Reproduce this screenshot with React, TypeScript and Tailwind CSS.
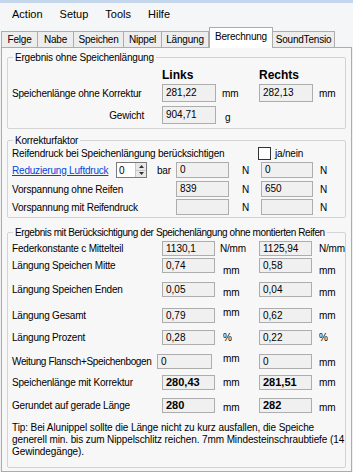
import React from 'react'

function Field({ value, className = '' }: { value?: string; className?: string }) {
  return (
    <div
      className={`h-full border border-[#adadad] bg-[#f0f0f0] pl-[3px] flex items-center leading-none tracking-normal ${className}`}
    >
      {value}
    </div>
  )
}

function GroupBox({
  title,
  className = '',
  titleClass = '',
  children,
}: {
  title: string
  className?: string
  titleClass?: string
  children: React.ReactNode
}) {
  return (
    <div className={`relative mx-[5px] border border-[#d3d3d3] rounded-[2px] ${className}`}>
      <span className={`absolute -top-[6px] left-[5px] px-[2px] bg-[#f7f7f7] leading-[12px] whitespace-nowrap ${titleClass}`}>
        {title}
      </span>
      {children}
    </div>
  )
}

const tabs = [
  { name: 'Felge', w: 'w-[37px]' },
  { name: 'Nabe', w: 'w-[36px]' },
  { name: 'Speichen', w: 'w-[50px]' },
  { name: 'Nippel', w: 'w-[38px]' },
  { name: 'Längung', w: 'w-[47px]' },
  { name: 'Berechnung', w: 'w-[64px]' },
  { name: 'SoundTensio', w: 'w-[62px]' },
]

export default function App() {
  return (
    <div className="w-[353px] h-[472px] overflow-hidden bg-[#f0f0f0] font-['Liberation_Sans',Arial,sans-serif] text-[10px] text-black">
      <div className="h-[3px] bg-[#c3d6eb]" />

      {/* Menu */}
      <div className="h-[23px] flex items-center gap-[17px] pl-[12px] bg-[#f5f6f7] text-[11px]">
        <span>Action</span>
        <span>Setup</span>
        <span>Tools</span>
        <span>Hilfe</span>
      </div>

      {/* Tabs */}
      <div className="h-[21px] flex items-end pl-[1px] bg-[#f5f6f7] tracking-[-0.2px]">
        {tabs.map((t) =>
          t.name === 'Berechnung' ? (
            <div
              key={t.name}
              className={`relative z-10 -mb-px h-[21px] pb-[3px] flex items-center justify-center bg-white border border-b-0 border-[#acacac] ${t.w}`}
            >
              {t.name}
            </div>
          ) : (
            <div
              key={t.name}
              className={`h-[16px] flex items-center justify-center bg-[#ededed] border border-b-0 border-l-0 first:border-l border-[#acacac] ${t.w}`}
            >
              {t.name}
            </div>
          )
        )}
      </div>

      {/* Tab page */}
      <div className="h-[425px] mx-[1px] border border-[#acacac] bg-[#f7f7f7] pt-[9px] tracking-[-0.2px] whitespace-nowrap">
        {/* Group 1 */}
        <GroupBox title="Ergebnis ohne Speichenlängung">
          <div className="pl-[4px] pt-[10px] pb-[4px]">
            <div className="h-[14px] flex items-center text-[12px] font-bold tracking-normal">
              <div className="w-[150px]" />
              <div className="w-[97px]">Links</div>
              <div>Rechts</div>
            </div>
            <div className="mt-[2px] h-[18px] flex items-center">
              <div className="w-[150px]">Speichenlänge ohne Korrektur</div>
              <Field value="281,22" className="w-[54px]" />
              <div className="w-[43px] pl-[6px]">mm</div>
              <Field value="282,13" className="w-[54px]" />
              <div className="pl-[6px]">mm</div>
            </div>
            <div className="mt-[4px] h-[18px] flex items-center">
              <div className="w-[150px] text-right pr-[18px]">Gewicht</div>
              <Field value="904,71" className="w-[54px]" />
              <div className="pl-[9px] pt-[4px]">g</div>
            </div>
          </div>
        </GroupBox>

        {/* Group 2 */}
        <GroupBox title="Korrekturfaktor" className="mt-[11px]">
          <div className="pl-[4px] pt-[4px] pb-[2px]">
            <div className="h-[16px] flex items-center">
              <div className="w-[246px]">Reifendruck bei Speichenlängung berücksichtigen</div>
              <div className="w-[13px] h-[13px] border border-[#333] bg-white" />
              <div className="pl-[4px]">ja/nein</div>
            </div>
            <div className="mt-[1px] h-[16px] flex items-center">
              <div className="w-[104px] text-[#0645d8] underline">Reduzierung Luftdruck</div>
              <div className="w-[31px] h-full flex border border-[#7a7a7a] bg-white">
                <div className="flex-1 pl-[2px] flex items-center">0</div>
                <div className="w-[11px] flex flex-col border-l border-[#c8c8c8] bg-[#e8e8e8]">
                  <div className="flex-1 flex items-center justify-center border-b border-[#c8c8c8]">
                    <svg width="5" height="3" viewBox="0 0 5 3">
                      <path d="M0 3 L2.5 0 L5 3 Z" fill="#333" />
                    </svg>
                  </div>
                  <div className="flex-1 flex items-center justify-center">
                    <svg width="5" height="3" viewBox="0 0 5 3">
                      <path d="M0 0 L2.5 3 L5 0 Z" fill="#333" />
                    </svg>
                  </div>
                </div>
              </div>
              <div className="w-[29px] pl-[10px]">bar</div>
              <Field value="0" className="w-[53px]" />
              <div className="w-[32px] pl-[13px]">N</div>
              <Field value="0" className="w-[52px]" />
              <div className="pl-[7px]">N</div>
            </div>
            <div className="mt-[3px] h-[16px] flex items-center">
              <div className="w-[164px]">Vorspannung ohne Reifen</div>
              <Field value="839" className="w-[53px]" />
              <div className="w-[32px] pl-[13px]">N</div>
              <Field value="650" className="w-[52px]" />
              <div className="pl-[7px]">N</div>
            </div>
            <div className="mt-[2px] h-[16px] flex items-center">
              <div className="w-[164px]">Vorspannung mit Reifendruck</div>
              <Field className="w-[53px]" />
              <div className="w-[32px] pl-[13px]">N</div>
              <Field className="w-[52px]" />
              <div className="pl-[7px]">N</div>
            </div>
          </div>
        </GroupBox>

        {/* Group 3 */}
        <GroupBox
          title="Ergebnis mit Berücksichtigung der Speichenlängung ohne montierten Reifen"
          titleClass="tracking-[-0.4px]"
          className="mt-[14px]"
        >
          <div className="pl-[4px] pt-[8px] pb-[9px]">
            <div className="h-[15px] flex items-center">
              <div className="w-[150px]">Federkonstante c Mittelteil</div>
              <Field value="1130,1" className="w-[53px]" />
              <div className="w-[44px] pl-[5px]">N/mm</div>
              <Field value="1125,94" className="w-[53px]" />
              <div className="pl-[7px]">N/mm</div>
            </div>
            <div className="mt-[2px] h-[15px] flex items-center">
              <div className="w-[150px]">Längung Speichen Mitte</div>
              <Field value="0,74" className="w-[53px]" />
              <div className="w-[44px] pl-[8px] pt-[10px]">mm</div>
              <Field value="0,58" className="w-[53px]" />
              <div className="pl-[7px] pt-[10px]">mm</div>
            </div>
            <div className="mt-[9px] h-[15px] flex items-center">
              <div className="w-[150px]">Längung Speichen Enden</div>
              <Field value="0,05" className="w-[53px]" />
              <div className="w-[44px] pl-[8px] pt-[6px]">mm</div>
              <Field value="0,04" className="w-[53px]" />
              <div className="pl-[7px] pt-[6px]">mm</div>
            </div>
            <div className="mt-[11px] h-[15px] flex items-center">
              <div className="w-[150px]">Längung Gesamt</div>
              <Field value="0,79" className="w-[53px]" />
              <div className="w-[44px] pl-[8px] pb-[6px]">mm</div>
              <Field value="0,62" className="w-[53px]" />
              <div className="pl-[7px]">mm</div>
            </div>
            <div className="mt-[7px] h-[15px] flex items-center">
              <div className="w-[150px]">Längung Prozent</div>
              <Field value="0,28" className="w-[53px]" />
              <div className="w-[44px] pl-[8px]">%</div>
              <Field value="0,22" className="w-[53px]" />
              <div className="pl-[7px]">%</div>
            </div>
            <div className="mt-[9px] h-[15px] flex items-center">
              <div className="w-[145px] tracking-[-0.35px]">Weitung Flansch+Speichenbogen</div>
              <Field value="0" className="w-[55px]" />
              <div className="w-[47px] pl-[11px] pb-[6px]">mm</div>
              <Field value="0" className="w-[53px]" />
              <div className="pl-[7px] pt-[2px]">mm</div>
            </div>
            <div className="mt-[6px] h-[15px] flex items-center">
              <div className="w-[150px]">Speichenlänge mit Korrektur</div>
              <Field value="280,43" className="w-[53px] font-bold text-[11px]" />
              <div className="w-[44px] pl-[8px]">mm</div>
              <Field value="281,51" className="w-[53px] font-bold text-[11px]" />
              <div className="pl-[7px]">mm</div>
            </div>
            <div className="mt-[8px] h-[15px] flex items-center">
              <div className="w-[150px]">Gerundet auf gerade Länge</div>
              <Field value="280" className="w-[53px] font-bold text-[11px]" />
              <div className="w-[44px] pl-[8px] pt-[4px]">mm</div>
              <Field value="282" className="w-[53px] font-bold text-[11px]" />
              <div className="pl-[7px] pt-[4px]">mm</div>
            </div>
            <p className="mt-[9px] w-[334px] leading-[12px] tracking-[-0.1px] whitespace-normal">
              Tip: Bei Alunippel sollte die Länge nicht zu kurz ausfallen, die Speiche generell min. bis zum Nippelschlitz
              reichen. 7mm Mindesteinschraubtiefe (14 Gewindegänge).
            </p>
          </div>
        </GroupBox>
      </div>
    </div>
  )
}
